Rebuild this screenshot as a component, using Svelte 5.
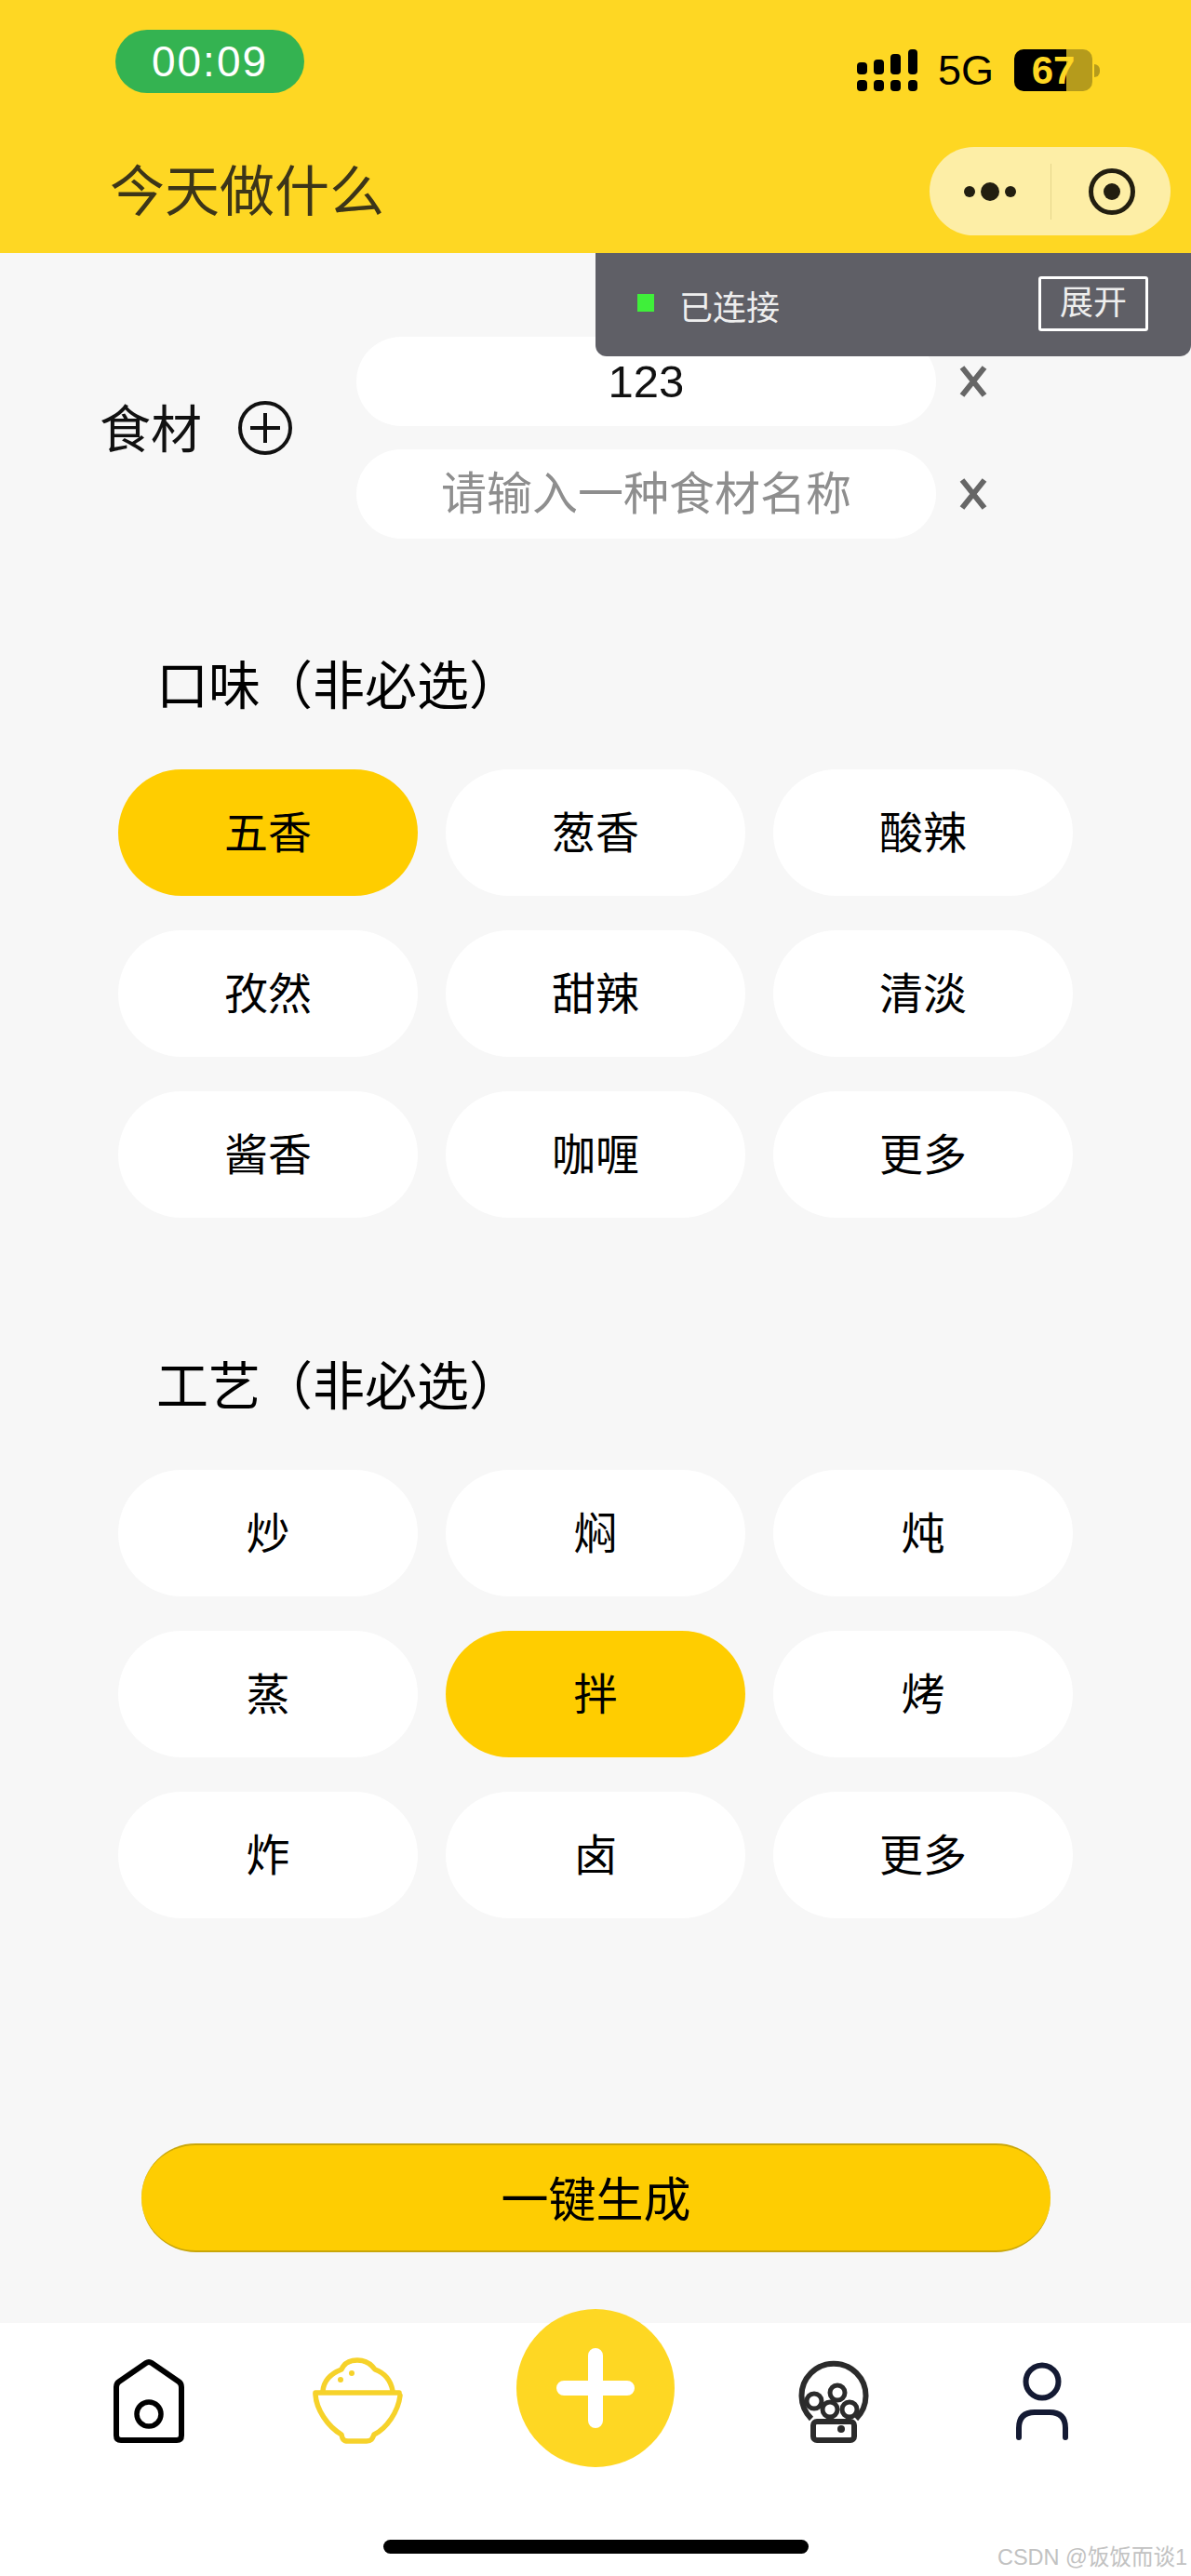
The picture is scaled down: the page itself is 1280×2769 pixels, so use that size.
<script>
	const flavors = ['五香', '葱香', '酸辣', '孜然', '甜辣', '清淡', '酱香', '咖喱', '更多'];
	const crafts = ['炒', '焖', '炖', '蒸', '拌', '烤', '炸', '卤', '更多'];
	let flavor = $state('五香');
	let craft = $state('拌');
	let ingredients = $state(['123', '']);
</script>

<div class="page">
	<header class="header">
		<div class="status">
			<div class="time">00:09</div>
			<div class="status-right">
				<svg class="signal" width="65" height="45" viewBox="0 0 65 45" aria-hidden="true">
					<rect x="0" y="14" width="11" height="13" rx="4" />
					<rect x="18" y="11" width="11" height="16" rx="4" />
					<rect x="36" y="5" width="11" height="22" rx="4" />
					<rect x="55" y="0" width="10" height="27" rx="4" />
					<rect x="0" y="33" width="11" height="12" rx="4" />
					<rect x="18" y="33" width="11" height="12" rx="4" />
					<rect x="36" y="33" width="11" height="12" rx="4" />
					<rect x="55" y="33" width="10" height="12" rx="4" />
				</svg>
				<span class="net">5G</span>
				<div class="battery">67</div>
				<span class="nub"></span>
			</div>
		</div>
		<div class="nav">
			<h1>今天做什么</h1>
			<div class="capsule">
				<div class="dots"><i></i><b></b><i></i></div>
				<span class="divider"></span>
				<div class="target"><span></span></div>
			</div>
		</div>
	</header>

	<div class="debug">
		<span class="dot"></span>
		<span class="debug-text">已连接</span>
		<button class="expand">展开</button>
	</div>

	<main class="main">
		<section class="ingredients">
			<div class="ing-label">
				<span>食材</span>
				<svg width="60" height="60" viewBox="0 0 60 60" aria-hidden="true">
					<circle cx="30" cy="30" r="27" fill="none" stroke="#111" stroke-width="4" />
					<path d="M30 14V46M14 30H46" stroke="#111" stroke-width="4" />
				</svg>
			</div>
			<div class="ing-list">
				{#each ingredients as item, i}
					<div class="ing-row">
						<input class="ing-input" placeholder="请输入一种食材名称" bind:value={ingredients[i]} />
						<svg class="remove" width="30" height="34" viewBox="0 0 30 34" aria-hidden="true">
							<path d="M3 2L27 32M27 2L3 32" stroke="#666" stroke-width="6" />
						</svg>
					</div>
				{/each}
			</div>
		</section>

		<section class="group flavor">
			<h2>口味（非必选）</h2>
			<div class="chips">
				{#each flavors as f}
					<button class="chip" class:active={flavor === f} onclick={() => (flavor = f)}>{f}</button>
				{/each}
			</div>
		</section>

		<section class="group craft">
			<h2>工艺（非必选）</h2>
			<div class="chips">
				{#each crafts as c}
					<button class="chip" class:active={craft === c} onclick={() => (craft = c)}>{c}</button>
				{/each}
			</div>
		</section>

		<button class="generate">一键生成</button>
	</main>

	<footer class="tabbar">
		<nav class="tabs">
			<svg width="100" height="100" viewBox="0 0 100 100" fill="none" stroke="#000" stroke-width="6" aria-label="首页">
				<path d="M15 34Q15 30 18 28L47 8Q50 6 53 8L82 28Q85 30 85 34V86Q85 91 80 91H20Q15 91 15 86Z" stroke-linejoin="round" />
				<circle cx="50" cy="63" r="13" stroke-width="5.5" />
			</svg>
			<svg width="100" height="100" viewBox="0 0 100 100" fill="none" stroke="#f6d22a" stroke-width="5.5" stroke-linecap="round" stroke-linejoin="round" aria-label="食谱">
				<path d="M5 40H95" />
				<path d="M13 38C14 28 20 20 33 15C36 8 43 5 50 5C58 5 64 8 69 15C80 19 86 27 88 38" />
				<path d="M5 42C6 58 18 76 33 85C34 90 35 92 40 92H60C65 92 66 90 68 85C82 78 94 60 96 43" />
				<circle cx="32" cy="26" r="3" fill="#f6d22a" stroke="none" />
				<circle cx="44" cy="19" r="3" fill="#f6d22a" stroke="none" />
			</svg>
			<button class="add" aria-label="添加">
				<svg width="170" height="170" viewBox="0 0 170 170">
					<circle cx="85" cy="85" r="85" fill="#fed723" />
					<path d="M85 50V120M51 85H119" stroke="#fff" stroke-width="16" stroke-linecap="round" />
				</svg>
			</button>
			<svg width="100" height="100" viewBox="0 0 100 100" fill="none" stroke="#2b2b2b" stroke-width="6" aria-label="发现">
				<path d="M26 68A34.5 34.5 0 1 1 74 68" />
				<rect x="28" y="71" width="44" height="20" rx="4" />
				<g fill="#fff" stroke-width="5">
					<circle cx="29" cy="49" r="8" />
					<circle cx="54" cy="40" r="8" />
					<circle cx="67" cy="58" r="8" />
					<circle cx="46" cy="58" r="8" />
				</g>
				<circle cx="58" cy="79" r="4" fill="#2b2b2b" stroke="none" />
			</svg>
			<svg width="100" height="100" viewBox="0 0 100 100" fill="none" stroke="#141a33" stroke-width="6" stroke-linecap="round" aria-label="我的">
				<circle cx="50" cy="28" r="17.5" />
				<path d="M25 88V78Q25 61 42 61H58Q75 61 75 78V88" />
			</svg>
		</nav>
		<div class="home-bar"></div>
		<span class="watermark">CSDN @饭饭而谈1</span>
	</footer>
</div>

<style>
	:global(body) {
		margin: 0;
		background: #f7f7f7;
	}

	.page {
		display: flex;
		flex-direction: column;
		position: relative;
		width: 1280px;
		height: 2769px;
		overflow: hidden;
		font-family: "Liberation Sans", "Noto Sans CJK SC", sans-serif;
		color: #111;
	}

	.header {
		flex: none;
		box-sizing: border-box;
		height: 272px;
		padding: 32px 22px 0 118px;
		background: #fed723;
	}

	.status {
		display: flex;
		justify-content: space-between;
		align-items: flex-start;
		height: 68px;
		padding-left: 6px;
	}

	.time {
		width: 203px;
		height: 68px;
		border-radius: 34px;
		background: #34b351;
		color: #fff;
		font-size: 46px;
		letter-spacing: 2px;
		line-height: 68px;
		text-align: center;
	}

	.status-right {
		display: flex;
		align-items: center;
		height: 45px;
		margin: 21px 76px 0 0;
	}

	.signal {
		fill: #000;
	}

	.net {
		margin: 0 22px;
		font-size: 45px;
		line-height: 45px;
		color: #000;
	}

	.battery {
		width: 84px;
		height: 45px;
		border-radius: 10px;
		background: linear-gradient(90deg, #000 56px, #b59b1c 56px);
		color: #fed723;
		font-size: 42px;
		font-weight: 700;
		line-height: 45px;
		text-align: center;
	}

	.nub {
		width: 6px;
		height: 14px;
		margin-left: 2px;
		border-radius: 0 7px 7px 0;
		background: #b59b1c;
	}

	.nav {
		display: flex;
		justify-content: space-between;
		align-items: center;
		height: 95px;
		margin-top: 58px;
	}

	h1 {
		margin: 0 0 -3px;
		font-size: 59px;
		font-weight: 400;
		line-height: 95px;
		color: #3c3519;
	}

	.capsule {
		display: flex;
		align-items: center;
		width: 259px;
		height: 95px;
		border-radius: 48px;
		background: #fdeea6;
	}

	.dots {
		display: flex;
		justify-content: center;
		align-items: center;
		gap: 6px;
		width: 130px;
	}

	.dots i {
		width: 12px;
		height: 12px;
		border-radius: 50%;
		background: #221e10;
	}

	.dots b {
		width: 20px;
		height: 20px;
		border-radius: 50%;
		background: #221e10;
	}

	.divider {
		width: 1px;
		height: 60px;
		background: #e6d68c;
	}

	.target {
		display: flex;
		justify-content: center;
		align-items: center;
		box-sizing: border-box;
		width: 50px;
		height: 50px;
		margin-left: 40px;
		border: 5px solid #221e10;
		border-radius: 50%;
	}

	.target span {
		width: 18px;
		height: 18px;
		border-radius: 50%;
		background: #221e10;
	}

	.debug {
		display: flex;
		align-items: center;
		position: absolute;
		top: 272px;
		left: 640px;
		z-index: 2;
		box-sizing: border-box;
		width: 640px;
		height: 111px;
		padding: 0 46px 0 45px;
		border-radius: 0 0 12px 12px;
		background: #5f5f66;
	}

	.dot {
		width: 18px;
		height: 19px;
		margin-bottom: 5px;
		background: #3fef3a;
	}

	.debug-text {
		flex: 1;
		margin-left: 27px;
		font-size: 36px;
		color: #eee;
	}

	.expand {
		box-sizing: border-box;
		width: 118px;
		height: 59px;
		margin-bottom: 3px;
		padding: 0;
		border: 3px solid #fff;
		border-radius: 3px;
		background: none;
		color: #eee;
		font: inherit;
		font-size: 36px;
		line-height: 50px;
	}

	.main {
		flex: 1;
		padding-top: 90px;
	}

	.ingredients {
		display: flex;
		align-items: center;
		padding-left: 107px;
	}

	.ing-label {
		display: flex;
		align-items: center;
		gap: 39px;
		width: 276px;
		margin-bottom: 22px;
		font-size: 55px;
	}

	.ing-label span {
		margin-top: -6px;
	}

	.ing-label svg {
		margin-left: -1px;
	}

	.ing-list {
		display: flex;
		flex-direction: column;
		gap: 25px;
	}

	.ing-row {
		display: flex;
		align-items: center;
		gap: 25px;
	}

	.ing-input {
		box-sizing: border-box;
		width: 623px;
		height: 96px;
		padding: 0 30px;
		border: none;
		border-radius: 48px;
		outline: none;
		background: #fff;
		color: #111;
		font: inherit;
		font-size: 49px;
		text-align: center;
	}

	.ing-input::placeholder {
		color: #8e8e8e;
		opacity: 1;
	}

	.group {
		padding-left: 127px;
	}

	.flavor {
		margin-top: 119px;
	}

	.craft {
		margin-top: 142px;
	}

	h2 {
		margin: 0 0 49px 41px;
		font-size: 56px;
		font-weight: 400;
		line-height: 80px;
		color: #000;
	}

	.chips {
		display: grid;
		grid-template-columns: repeat(3, 322px);
		grid-auto-rows: 136px;
		gap: 37px 30px;
	}

	.chip {
		padding: 0 0 8px;
		border: none;
		border-radius: 68px;
		background: #fff;
		color: #000;
		font: inherit;
		font-size: 47px;
	}

	.chip.active {
		background: #ffcd00;
	}

	.generate {
		display: block;
		box-sizing: border-box;
		width: 977px;
		height: 117px;
		margin: 242px 0 0 152px;
		padding: 0 0 3px;
		border: none;
		border-top: 2px solid #c9a70a;
		border-bottom: 2px solid #c9a70a;
		border-radius: 59px;
		background: #fecd02;
		color: #000;
		font: inherit;
		font-size: 51px;
	}

	.tabbar {
		flex: none;
		display: flex;
		flex-direction: column;
		position: relative;
		height: 272px;
		background: #fff;
	}

	.tabs {
		display: grid;
		grid-template-columns: 224px 224px 288px 224px 224px;
		justify-items: center;
		padding: 35px 48px 0;
		height: 198px;
	}

	.add {
		height: 170px;
		margin-top: -50px;
		padding: 0;
		border: none;
		background: none;
	}

	.home-bar {
		width: 457px;
		height: 15px;
		margin-left: 412px;
		border-radius: 8px;
		background: #000;
	}

	.watermark {
		position: absolute;
		right: 4px;
		bottom: 5px;
		color: #c2c2c2;
		font-size: 23.5px;
		white-space: nowrap;
	}
</style>
